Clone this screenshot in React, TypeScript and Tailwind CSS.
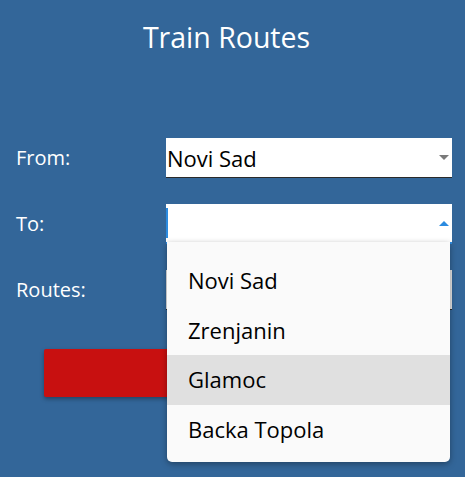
import { FC } from "react";

const cities = ["Novi Sad", "Zrenjanin", "Glamoc", "Backa Topola"];

const Arrow: FC<{ up?: boolean; color: string }> = ({ up, color }) => (
  <svg width="10" height="6" viewBox="0 0 10 6" className="absolute right-[3px] top-1/2 -translate-y-1/2">
    <path d={up ? "M0 6 L5 1 L10 6 Z" : "M0 0 L10 0 L5 5 Z"} fill={color} />
  </svg>
);

const App: FC = () => {
  return (
    <div
      className="h-[477px] w-full overflow-hidden bg-[#336699] text-white"
      style={{ fontFamily: '"Open Sans", "Noto Sans", sans-serif' }}
    >
      <h1 className="pr-[12px] pt-[17px] text-center text-[28.5px] leading-[40px]">Train Routes</h1>

      <div className="mt-[81px] grid grid-cols-[150px_286px] gap-y-[26px] pl-[16px]">
        <label className="flex h-[40px] items-center text-[20px]">From:</label>
        <div className="relative h-[40px] border-b border-[#2a2a2a] bg-white">
          <span className="block pl-px text-[22px] leading-[40px] text-black">Novi Sad</span>
          <Arrow color="#7a7a7a" />
        </div>

        <label className="flex h-[40px] items-center text-[20px]">To:</label>
        <div className="relative h-[40px] border-b-2 border-[#2b8be0] bg-white">
          <div className="absolute left-0 top-[4px] h-[30px] w-[1.5px] bg-[#2b8be0]" />
          <Arrow up color="#2b8be0" />
          <ul className="absolute left-px top-full z-10 w-[283px] rounded-b-[5px] bg-[#fafafa] pb-[8px] pt-[14px] text-black shadow-[0_2px_6px_rgba(0,0,0,0.35)]">
            {cities.map((c) => (
              <li
                key={c}
                className={`h-[49.5px] pl-[21px] text-[22px] leading-[49.5px] ${c === "Glamoc" ? "bg-[#e0e0e0]" : ""}`}
              >
                {c}
              </li>
            ))}
          </ul>
        </div>

        <label className="flex h-[40px] items-center text-[20px]">Routes:</label>
        <div className="relative h-[40px] border-b border-[#2a2a2a] bg-[#e4e4e4]">
          <Arrow color="#7a7a7a" />
        </div>
      </div>

      <div className="mt-[39px] px-[44px]">
        <button className="h-[48px] w-[377px] rounded-[2px] bg-[#c81010] shadow-[0_2px_4px_rgba(0,0,0,0.35)]" />
      </div>
    </div>
  );
};

export default App;
